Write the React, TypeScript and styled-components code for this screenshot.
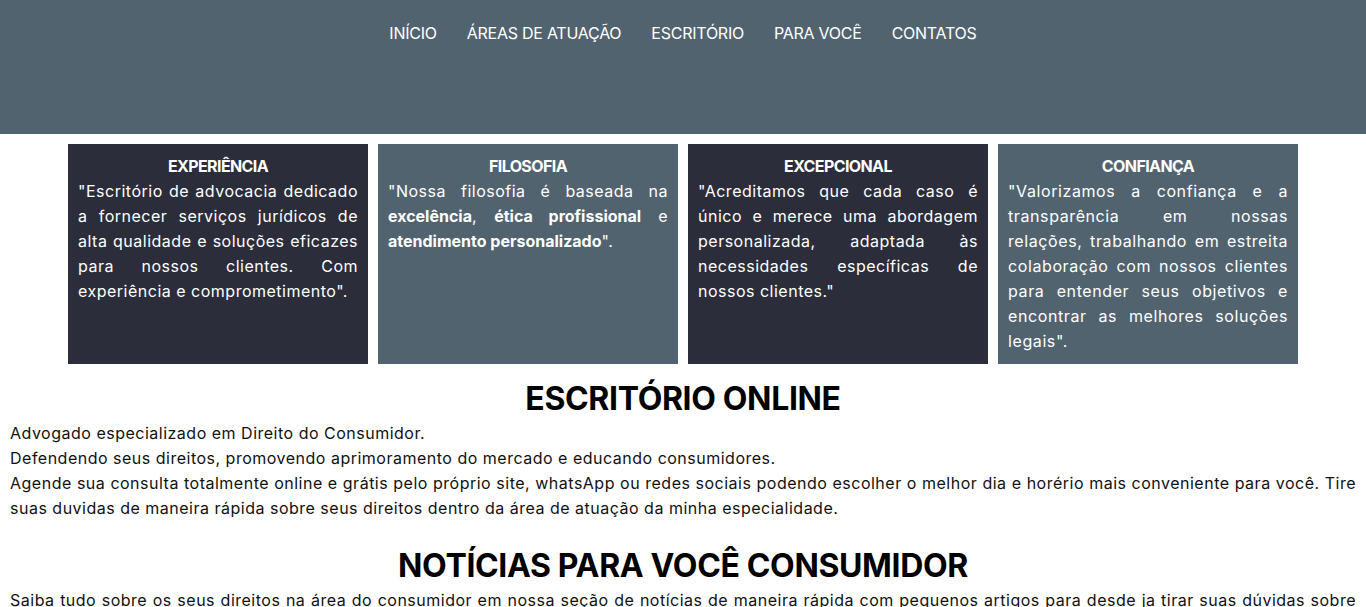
import React from "react";
import styled, { createGlobalStyle } from "styled-components";

const Global = createGlobalStyle`
  * { box-sizing: border-box; }
  body {
    margin: 0;
    font-family: Inter, "Open Sans", sans-serif;
    color: #000;
    background: #fff;
  }
`;

const Header = styled.header`
  height: 134px;
  background: #526370;
  display: flex;
  justify-content: center;
  align-items: flex-start;
  padding-top: 22px;
`;

const Nav = styled.nav`
  display: flex;
  gap: 30px;
`;

const NavLink = styled.a`
  color: #fff;
  font-size: 16px;
  line-height: 22px;
  letter-spacing: -0.25px;
  text-decoration: none;
`;

const Cards = styled.section`
  display: grid;
  grid-template-columns: repeat(4, 300px);
  gap: 10px;
  justify-content: center;
  margin-top: 10px;
`;

const Card = styled.div<{ $dark?: boolean; $tracking: number }>`
  height: 220px;
  background: ${(p) => (p.$dark ? "#2b2e3a" : "#526370")};
  color: #fff;
  padding: 10px;
  font-size: 16px;
  line-height: 25px;
  letter-spacing: ${(p) => p.$tracking}px;
`;

const CardTitle = styled.h3`
  margin: 0;
  font-size: 16px;
  line-height: 25px;
  font-weight: 700;
  text-align: center;
  letter-spacing: -0.6px;
`;

const CardText = styled.p`
  margin: 0;
  text-align: justify;
  b {
    font-weight: 700;
    letter-spacing: 0;
  }
`;

const Title = styled.h1<{ $top: number }>`
  margin: ${(p) => p.$top}px 0 2px;
  font-size: 32px;
  line-height: 40px;
  font-weight: 700;
  text-align: center;
  letter-spacing: -0.35px;
`;

const Text = styled.p`
  margin: 0;
  padding: 0 10px;
  font-size: 16px;
  line-height: 25px;
  letter-spacing: 0.5px;
  text-align: justify;
  color: #111;
`;

const cards = [
  {
    dark: true,
    tracking: 0.5,
    title: "EXPERIÊNCIA",
    body: <>"Escritório de advocacia dedicado a fornecer serviços jurídicos de alta qualidade e soluções eficazes para nossos clientes. Com experiência e comprometimento".</>,
  },
  {
    dark: false,
    tracking: 0.5,
    title: "FILOSOFIA",
    body: <>"Nossa filosofia é baseada na <b>excelência</b>, <b>ética profissional</b> e <b>atendimento personalizado</b>".</>,
  },
  {
    dark: true,
    tracking: 0.5,
    title: "EXCEPCIONAL",
    body: <>"Acreditamos que cada caso é único e merece uma abordagem personalizada, adaptada às necessidades específicas de nossos clientes."</>,
  },
  {
    dark: false,
    tracking: 0.6,
    title: "CONFIANÇA",
    body: <>"Valorizamos a confiança e a transparência em nossas relações, trabalhando em estreita colaboração com nossos clientes para entender seus objetivos e encontrar as melhores soluções legais".</>,
  },
];

export default function App() {
  return (
    <>
      <Global />
      <Header>
        <Nav>
          {["INÍCIO", "ÁREAS DE ATUAÇÃO", "ESCRITÓRIO", "PARA VOCÊ", "CONTATOS"].map((n) => (
            <NavLink key={n} href="#">{n}</NavLink>
          ))}
        </Nav>
      </Header>
      <Cards>
        {cards.map((c) => (
          <Card key={c.title} $dark={c.dark} $tracking={c.tracking}>
            <CardTitle>{c.title}</CardTitle>
            <CardText>{c.body}</CardText>
          </Card>
        ))}
      </Cards>
      <Title $top={15}>ESCRITÓRIO ONLINE</Title>
      <Text>
        Advogado especializado em Direito do Consumidor.
        <br />
        Defendendo seus direitos, promovendo aprimoramento do mercado e educando consumidores.
        <br />
        Agende sua consulta totalmente online e grátis pelo próprio site, whatsApp ou redes sociais podendo escolher o melhor dia e horério mais conveniente para você. Tire suas duvidas de maneira rápida sobre seus direitos dentro da área de atuação da minha especialidade.
      </Text>
      <Title $top={25}>NOTÍCIAS PARA VOCÊ CONSUMIDOR</Title>
      <Text>
        Saiba tudo sobre os seus direitos na área do consumidor em nossa seção de notícias de maneira rápida com pequenos artigos para desde ja tirar suas dúvidas sobre qualquer assunto relacionado ao direito do consumidor.
      </Text>
    </>
  );
}
